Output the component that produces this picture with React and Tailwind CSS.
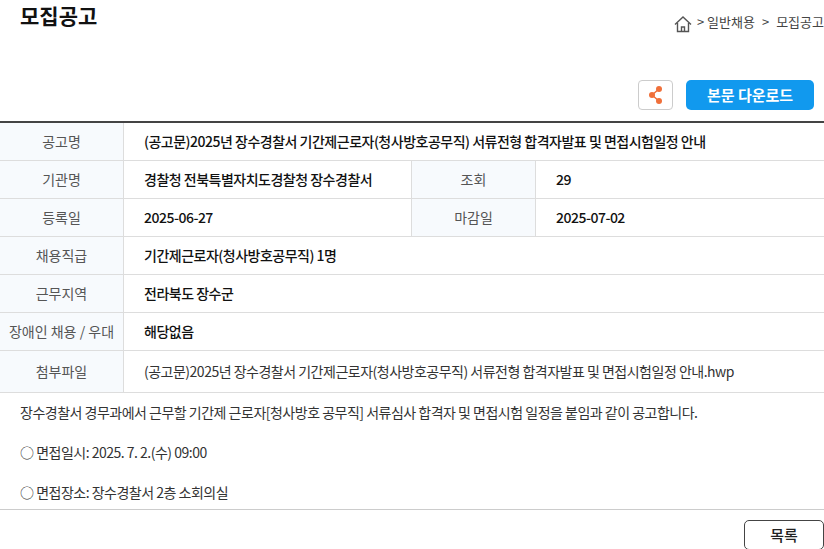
const FONT = "font-['Noto_Sans_CJK_KR','Noto_Sans',sans-serif]";

const Label = ({ children, className = "" }) => (
  <div className={`flex items-center justify-center bg-[#f7fafd] border-r border-[#dddddd] text-[14px] text-[#555555] ${className}`}>
    {children}
  </div>
);

const Row = ({ label, children, height = "h-[38px]" }) => (
  <div className={`flex ${height} border-b border-[#dddddd]`}>
    <Label className="w-[124px]">{label}</Label>
    <div className="flex-1 flex items-center pl-5 text-[14px] font-medium tracking-[-0.5px] text-[#111111] whitespace-nowrap">
      {children}
    </div>
  </div>
);

const SplitRow = ({ label, value, label2, value2 }) => (
  <div className="flex h-[38px] border-b border-[#dddddd]">
    <Label className="w-[124px]">{label}</Label>
    <div className="w-[288px] flex items-center pl-5 border-r border-[#dddddd] text-[14px] font-medium tracking-[-0.5px] text-[#111111] whitespace-nowrap">
      {value}
    </div>
    <Label className="w-[124px]">{label2}</Label>
    <div className="flex-1 flex items-center pl-5 text-[14px] font-medium tracking-[-0.5px] text-[#111111]">
      {value2}
    </div>
  </div>
);

export default function App() {
  return (
    <div className={`w-[824px] h-[549px] overflow-hidden bg-white ${FONT}`}>
      <div className="flex justify-between h-[80px]">
        <h1 className="ml-5 text-[21px] leading-[30px] font-bold text-[#111111]">모집공고</h1>
        <div className="flex items-center h-[20px] mt-3 gap-[5px] text-[13px] text-[#444444] whitespace-nowrap">
          <svg width="18" height="18" viewBox="0 0 18 18" fill="none" stroke="#555555" strokeWidth="1.4" className="mt-1">
            <path d="M1 9.5 9 2l8 7.5" />
            <path d="M3.5 8v8.5h11V8" />
            <path d="M7.5 16.5V12h3v4.5" />
          </svg>
          <span>&gt; 일반채용</span>
          <span className="ml-[2px]">&gt;</span>
          <span className="ml-[2px]">모집공고</span>
        </div>
      </div>

      <div className="flex justify-end gap-[13px] pr-[10px] h-[41px]">
        <button className="flex items-center justify-center w-[35px] h-[30px] border border-[#cccccc] rounded-[4px] bg-white">
          <svg width="16" height="22" viewBox="0 0 16 22" fill="#f0703a">
            <path d="M11 5 4 11l7 6" fill="none" stroke="#f0703a" strokeWidth="1.5" />
            <circle cx="11" cy="5" r="3" />
            <circle cx="4" cy="11" r="3" />
            <circle cx="11" cy="17" r="3" />
          </svg>
        </button>
        <button className="w-[128px] h-[30px] rounded-[5px] bg-[#1199ee] text-white text-[15px] font-bold">
          본문 다운로드
        </button>
      </div>

      <div className="border-t-2 border-[#444444]">
        <Row label="공고명">(공고문)2025년 장수경찰서 기간제근로자(청사방호공무직) 서류전형 합격자발표 및 면접시험일정 안내</Row>
        <SplitRow label="기관명" value="경찰청 전북특별자치도경찰청 장수경찰서" label2="조회" value2="29" />
        <SplitRow label="등록일" value="2025-06-27" label2="마감일" value2="2025-07-02" />
        <Row label="채용직급">기간제근로자(청사방호공무직) 1명</Row>
        <Row label="근무지역">전라북도 장수군</Row>
        <Row label="장애인 채용 / 우대">해당없음</Row>
        <div className="flex h-[42px] border-b border-[#dddddd]">
          <Label className="w-[124px]">첨부파일</Label>
          <div className="flex-1 flex items-center pl-5 text-[14px] tracking-[-0.5px] text-[#333333] whitespace-nowrap">
            (공고문)2025년 장수경찰서 기간제근로자(청사방호공무직) 서류전형 합격자발표 및 면접시험일정 안내.hwp
          </div>
        </div>
      </div>

      <div className="h-[117px] border-b border-[#cccccc] pl-5 pt-[9px] text-[14px] leading-[20px] tracking-[-0.5px] text-[#333333]">
        <p>장수경찰서 경무과에서 근무할 기간제 근로자[청사방호 공무직] 서류심사 합격자 및 면접시험 일정을 붙임과 같이 공고합니다.</p>
        <p className="mt-5">○ 면접일시: 2025. 7. 2.(수) 09:00</p>
        <p className="mt-5">○ 면접장소: 장수경찰서 2층 소회의실</p>
      </div>

      <div className="flex justify-end pt-[10px]">
        <button className="w-[80px] h-[30px] border border-[#444444] rounded-[5px] bg-white text-[15px] font-medium text-[#222222]">
          목록
        </button>
      </div>
    </div>
  );
}
